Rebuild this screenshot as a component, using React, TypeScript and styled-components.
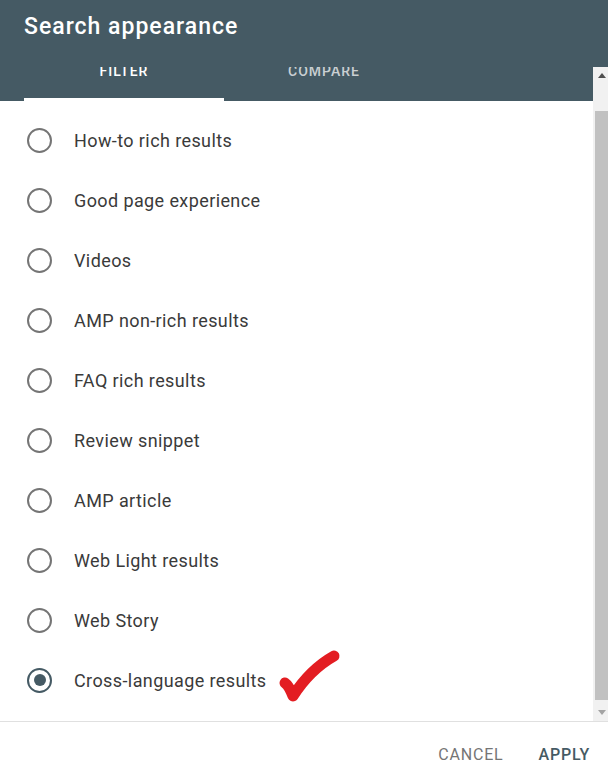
import React from 'react'
import styled, { createGlobalStyle } from 'styled-components'

const GlobalStyle = createGlobalStyle`
  html, body {
    margin: 0;
    padding: 0;
    background: #ffffff;
  }
  body {
    font-family: Roboto, 'Liberation Sans', Arial, sans-serif;
  }
`

const Dialog = styled.div`
  width: 608px;
  height: 782px;
  display: flex;
  flex-direction: column;
  background: #ffffff;
  overflow: hidden;
`

const TitleBar = styled.div`
  height: 67px;
  box-sizing: border-box;
  padding: 13px 24px 0;
  background: #455a64;
  flex-shrink: 0;
`

const Titulo = styled.h2`
  margin: 0;
  font-size: 23px;
  line-height: 28px;
  font-weight: 500;
  letter-spacing: 1px;
  color: #ffffff;
`

const Body = styled.div`
  flex: 1;
  display: flex;
  min-height: 0;
  overflow: hidden;
`

const Content = styled.div`
  flex: 1;
  display: flex;
  flex-direction: column;
  overflow: hidden;
`

const TabBar = styled.div`
  height: 34px;
  flex-shrink: 0;
  display: flex;
  padding-left: 24px;
  background: #455a64;
  overflow: hidden;
`

const Tab = styled.div<{ $active?: boolean }>`
  width: 200px;
  height: 34px;
  box-sizing: border-box;
  display: flex;
  justify-content: center;
  align-items: flex-start;
  border-bottom: 3px solid ${p => (p.$active ? '#ffffff' : 'transparent')};
`

const TabLabel = styled.span<{ $active?: boolean }>`
  margin-top: -4px;
  font-size: 14px;
  line-height: 16px;
  font-weight: 500;
  letter-spacing: 1px;
  text-transform: uppercase;
  color: ${p => (p.$active ? '#ffffff' : 'rgba(255, 255, 255, 0.72)')};
`

const List = styled.div`
  display: flex;
  flex-direction: column;
  padding: 9px 0 11px;
`

const Row = styled.label`
  position: relative;
  height: 60px;
  display: flex;
  align-items: center;
  padding-left: 27px;
  cursor: pointer;
`

const Radio = styled.span<{ $checked?: boolean }>`
  width: 25px;
  height: 25px;
  box-sizing: border-box;
  border-radius: 50%;
  border: 2px solid ${p => (p.$checked ? '#455a64' : '#757575')};
  display: flex;
  align-items: center;
  justify-content: center;
  flex-shrink: 0;

  &::after {
    content: '';
    display: ${p => (p.$checked ? 'block' : 'none')};
    width: 12px;
    height: 12px;
    border-radius: 50%;
    background: #455a64;
  }
`

const RowText = styled.span`
  margin-left: 22px;
  font-size: 18px;
  letter-spacing: 0.4px;
  color: #3a3a3a;
`

const Marca = styled.svg`
  position: absolute;
  left: 277px;
  top: -3px;
`

const Scrollbar = styled.div`
  width: 15px;
  flex-shrink: 0;
  display: flex;
  flex-direction: column;
  background: #f1f1f1;
`

const ArrowBox = styled.div`
  height: 17px;
  display: flex;
  align-items: center;
  padding-left: 5px;
`

const ArrowUp = styled.span`
  width: 0;
  height: 0;
  border-left: 4px solid transparent;
  border-right: 4px solid transparent;
  border-bottom: 5px solid #505050;
`

const ArrowDown = styled.span`
  width: 0;
  height: 0;
  border-left: 4px solid transparent;
  border-right: 4px solid transparent;
  border-top: 5px solid #a3a3a3;
`

const Track = styled.div`
  flex: 1;
  padding: 27px 0 4px 2px;
  display: flex;
`

const Thumb = styled.div`
  flex: 1;
  background: #c1c1c1;
`

const Footer = styled.div`
  height: 61px;
  box-sizing: border-box;
  flex-shrink: 0;
  border-top: 1px solid #e0e0e0;
  display: flex;
  justify-content: flex-end;
  align-items: center;
  gap: 19px;
  padding: 4px 10px 0 0;
`

const Botao = styled.button<{ $primary?: boolean }>`
  border: none;
  background: none;
  padding: 8px 8px;
  font-family: Roboto, 'Liberation Sans', Arial, sans-serif;
  font-size: 16px;
  font-weight: ${p => (p.$primary ? 500 : 400)};
  letter-spacing: 0.8px;
  color: ${p => (p.$primary ? '#455a64' : '#757575')};
  cursor: pointer;
`

const opcoes = [
  'How-to rich results',
  'Good page experience',
  'Videos',
  'AMP non-rich results',
  'FAQ rich results',
  'Review snippet',
  'AMP article',
  'Web Light results',
  'Web Story',
  'Cross-language results',
]

const App = () => {
  const selecionado = 'Cross-language results'

  return (
    <>
      <GlobalStyle />
      <Dialog>
        <TitleBar>
          <Titulo>Search appearance</Titulo>
        </TitleBar>
        <Body>
          <Content>
            <TabBar>
              <Tab $active>
                <TabLabel $active>Filter</TabLabel>
              </Tab>
              <Tab>
                <TabLabel>Compare</TabLabel>
              </Tab>
            </TabBar>
            <List>
              {opcoes.map(op => (
                <Row key={op}>
                  <Radio $checked={op === selecionado} />
                  <RowText>{op}</RowText>
                  {op === selecionado && (
                    <Marca width="66" height="58" viewBox="0 0 66 58">
                      <path
                        d="M8 36 C11 38 14 44 16 49 C27 32 41 18 57 9"
                        fill="none"
                        stroke="#e31d22"
                        strokeWidth="11"
                        strokeLinecap="round"
                        strokeLinejoin="round"
                      />
                    </Marca>
                  )}
                </Row>
              ))}
            </List>
          </Content>
          <Scrollbar>
            <ArrowBox>
              <ArrowUp />
            </ArrowBox>
            <Track>
              <Thumb />
            </Track>
            <ArrowBox>
              <ArrowDown />
            </ArrowBox>
          </Scrollbar>
        </Body>
        <Footer>
          <Botao>CANCEL</Botao>
          <Botao $primary>APPLY</Botao>
        </Footer>
      </Dialog>
    </>
  )
}

export default App
